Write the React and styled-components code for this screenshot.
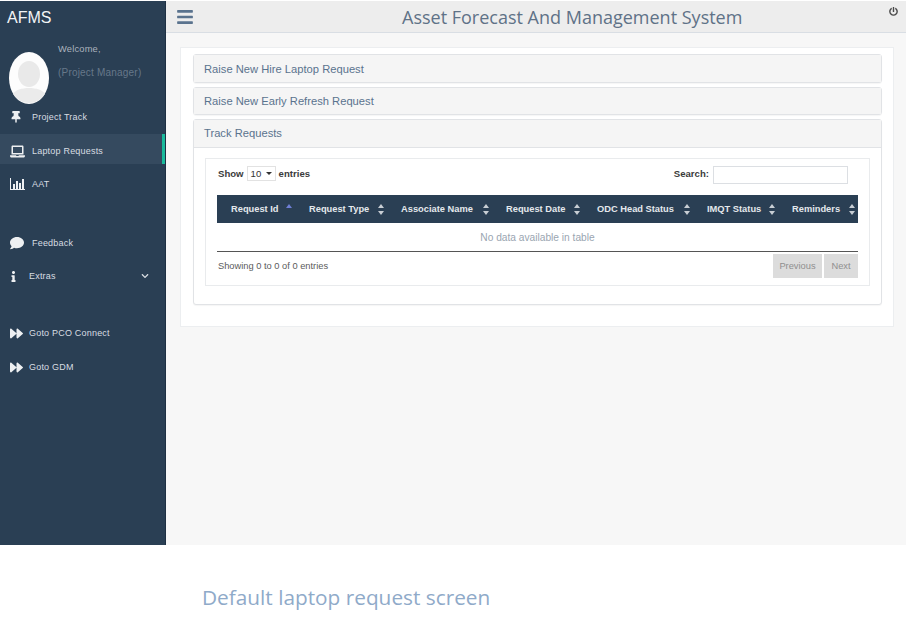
import React from 'react';
import styled, { createGlobalStyle } from 'styled-components';
import { FaThumbtack, FaLaptop, FaComment, FaInfo, FaForward, FaChevronDown, FaBars, FaPowerOff } from 'react-icons/fa';

const GlobalStyle = createGlobalStyle`
  html, body {
    margin: 0;
    background: #fff;
    font-family: "Liberation Sans", Arial, sans-serif;
  }
  * { box-sizing: border-box; }
`;

const Page = styled.div`
  width: 907px;
  height: 627px;
  padding-top: 1px;
  overflow: hidden;
`;

const Shell = styled.div`
  display: flex;
  height: 544px;
  margin-right: 1px;
`;

const Sidebar = styled.aside`
  width: 166px;
  flex: none;
  background: #2a3f54;
  border-right: 1px solid #1e3043;
  color: #e2e6ea;
`;

const Brand = styled.div`
  height: 32px;
  padding: 8px 0 0 7px;
  font-size: 16px;
  line-height: 18px;
  color: #f2f4f6;
`;

const Profile = styled.div`
  display: flex;
  height: 67px;
  padding: 4px 0 0 9px;
`;

const Avatar = styled.svg`
  width: 40px;
  height: 52px;
  flex: none;
  margin-top: 15px;
`;

const Welcome = styled.div`
  margin-left: 9px;
  padding-top: 6px;
  font-size: 10px;
  letter-spacing: 0.2px;
`;

const Hello = styled.div`
  color: #aab4be;
  font-size: 9.3px;
  line-height: 12px;
`;

const Role = styled.div`
  margin-top: 12px;
  color: #67788a;
  line-height: 12px;
`;

const NavRow = styled.div`
  position: relative;
  display: flex;
  align-items: center;
  height: 30px;
  margin-top: ${p => p.$top || 0}px;
  padding: 4px 0 0 10px;
  font-size: 9px;
  letter-spacing: 0.2px;
  color: #d8dde2;
  background: ${p => (p.$active ? '#354a5f' : 'transparent')};
  border-right: ${p => (p.$active ? '3px solid #1abb9c' : 'none')};
`;

const NavIcon = styled.span`
  display: inline-flex;
  width: ${p => p.$w || 22}px;
  margin-left: ${p => p.$shift || 0}px;
  flex: none;
  color: #eef0f2;
  font-size: 12px;
`;

const Caret = styled.span`
  display: inline-flex;
  margin-left: auto;
  margin-right: 16px;
  font-size: 8px;
`;

const Main = styled.main`
  flex: 1;
  min-width: 0;
  background: #f7f7f7;
`;

const TopBar = styled.header`
  position: relative;
  display: flex;
  align-items: center;
  height: 32px;
  background: #ededed;
  border-bottom: 1px solid #d9dee4;
`;

const MenuButton = styled.span`
  display: inline-flex;
  margin-left: 10px;
  color: #5a738e;
  font-size: 18px;
`;

const Title = styled.h1`
  margin: 0 0 0 208px;
  font-family: "Open Sans", sans-serif;
  font-size: 18px;
  font-weight: 400;
  line-height: 30px;
  color: #5f7287;
`;

const Power = styled.span`
  position: absolute;
  top: 6px;
  right: 8px;
  display: inline-flex;
  color: #4a4a4a;
  font-size: 9px;
`;

const Content = styled.div`
  margin: 14px 12px 0 14px;
  padding: 6px 11px 22px 12px;
  background: #fff;
  border: 1px solid #eceef0;
  height: 280px;
`;

const Accordion = styled.section`
  margin-bottom: 4px;
  background: #fff;
  border: 1px solid #e1e3e6;
  border-radius: 3px;
  box-shadow: 0 1px 1px rgba(0, 0, 0, 0.04);
`;

const AccordionHead = styled.div`
  height: ${p => p.$h}px;
  padding: 0 0 ${p => (p.$open ? 2 : 0)}px 10px;
  display: flex;
  align-items: center;
  background: #f5f5f5;
  font-size: 11.2px;
  color: #5a738e;
  border-bottom: ${p => (p.$open ? '1px solid #e1e3e6' : 'none')};
`;

const AccordionBody = styled.div`
  padding: 10px 11px 18px 11px;
`;

const TableBox = styled.div`
  height: 128px;
  padding: 0 11px;
  border: 1px solid #e9ebed;
`;

const ControlRow = styled.div`
  display: flex;
  justify-content: space-between;
  height: 36px;
  padding: 7px 0 0 1px;
  font-size: 9.6px;
  font-weight: 700;
  color: #3b3b3b;
`;

const Control = styled.label`
  display: flex;
  align-items: flex-start;
  gap: 3px;
  line-height: 15px;
`;

const FakeSelect = styled.span`
  display: inline-flex;
  align-items: center;
  justify-content: space-between;
  width: 29px;
  height: 15px;
  padding: 0 3px;
  border: 1px solid #e2e2e2;
  font-weight: 400;
  color: #333;
`;

const SelectArrow = styled.span`
  width: 0;
  height: 0;
  border-left: 3px solid transparent;
  border-right: 3px solid transparent;
  border-top: 3px solid #333;
`;

const SearchBox = styled.input`
  width: 135px;
  height: 18px;
  margin: 0 10px 0 1px;
  border: 1px solid #dcdfe3;
  background: #fff;
`;

const Table = styled.table`
  width: 641px;
  border-collapse: collapse;
  table-layout: fixed;
  font-size: 9.3px;
`;

const HeadCell = styled.th`
  position: relative;
  height: 28px;
  padding: 0 0 0 ${p => p.$pad}px;
  width: ${p => p.$w}px;
  background: #2a3f54;
  text-align: left;
  font-weight: 700;
  color: #e4e8ec;
  white-space: nowrap;
`;

const SortIcon = styled.svg`
  position: absolute;
  top: 9px;
  right: ${p => p.$right}px;
  width: 6px;
  height: 11px;
`;

const EmptyCell = styled.td`
  height: 28px;
  padding-top: 2px;
  text-align: center;
  font-size: 10.2px;
  color: #9aa5b1;
  border-bottom: 1px solid #555;
`;

const Footer = styled.div`
  display: flex;
  justify-content: space-between;
  padding: 2px 0 0 1px;
  font-size: 9.3px;
  color: #5b5b5b;
`;

const Info = styled.div`
  padding-top: 6px;
  line-height: 12px;
`;

const Pager = styled.div`
  display: flex;
  gap: 2px;
`;

const PageButton = styled.span`
  display: flex;
  align-items: center;
  justify-content: center;
  width: ${p => p.$w}px;
  height: 24px;
  background: #dcdcdc;
  color: #8f8f8f;
`;

const Caption = styled.div`
  padding: 38px 0 0 202px;
  font-family: "Open Sans", sans-serif;
  font-size: 20.8px;
  line-height: 28px;
  color: #8faac9;
`;

function BarsIcon() {
  return (
    <svg width="15" height="12" viewBox="0 0 15 12" fill="#eef0f2">
      <rect x="0" y="0" width="1" height="11" />
      <rect x="0" y="11" width="15" height="1" />
      <rect x="3" y="6" width="2" height="5" />
      <rect x="6" y="3" width="2" height="8" />
      <rect x="9" y="5" width="2" height="6" />
      <rect x="12" y="1" width="2" height="10" />
    </svg>
  );
}

const nav = [
  { label: 'Project Track', icon: <FaThumbtack /> },
  { label: 'Laptop Requests', icon: <FaLaptop size={15} />, top: 4, active: true },
  { label: 'AAT', icon: <BarsIcon />, top: 3 },
  { label: 'Feedback', icon: <FaComment size={14} />, top: 29 },
  { label: 'Extras', icon: <FaInfo size={11} />, top: 3, w: 21, shift: -2, caret: true },
  { label: 'Goto PCO Connect', icon: <FaForward size={13} />, top: 27, w: 19 },
  { label: 'Goto GDM', icon: <FaForward size={13} />, top: 4, w: 19 },
];

const columns = [
  { label: 'Request Id', w: 78, pad: 14, right: 3, asc: true },
  { label: 'Request Type', w: 92, pad: 14, right: 3 },
  { label: 'Associate Name', w: 104, pad: 14, right: 2 },
  { label: 'Request Date', w: 92, pad: 15, right: 3 },
  { label: 'ODC Head Status', w: 109, pad: 14, right: 2 },
  { label: 'IMQT Status', w: 85, pad: 15, right: 2 },
  { label: 'Reminders', w: 81, pad: 15, right: 3 },
];

function Sort({ asc, right }) {
  return (
    <SortIcon $right={right} viewBox="0 0 6 11">
      <path d="M3 0 L6 4 L0 4 Z" fill={asc ? '#6f7fd6' : '#c8ced4'} />
      {!asc && <path d="M3 11 L6 7 L0 7 Z" fill="#c8ced4" />}
    </SortIcon>
  );
}

export default function App() {
  return (
    <Page>
      <GlobalStyle />
      <Shell>
        <Sidebar>
          <Brand>AFMS</Brand>
          <Profile>
            <Avatar viewBox="0 0 40 52">
              <ellipse cx="20" cy="26" rx="20" ry="26" fill="#fdfdfd" />
              <ellipse cx="20" cy="22" rx="11" ry="13" fill="#e9e9e9" />
              <path d="M4 42 C8 34 32 34 36 42 C32 48 26 51 20 51 C14 51 8 48 4 42 Z" fill="#ebebeb" />
            </Avatar>
            <Welcome>
              <Hello>Welcome,</Hello>
              <Role>(Project Manager)</Role>
            </Welcome>
          </Profile>
          {nav.map(item => (
            <NavRow key={item.label} $top={item.top} $active={item.active}>
              <NavIcon $w={item.w} $shift={item.shift}>{item.icon}</NavIcon>
              {item.label}
              {item.caret && (
                <Caret>
                  <FaChevronDown />
                </Caret>
              )}
            </NavRow>
          ))}
        </Sidebar>
        <Main>
          <TopBar>
            <MenuButton>
              <FaBars />
            </MenuButton>
            <Title>Asset Forecast And Management System</Title>
            <Power>
              <FaPowerOff />
            </Power>
          </TopBar>
          <Content>
            <Accordion>
              <AccordionHead $h={27}>Raise New Hire Laptop Request</AccordionHead>
            </Accordion>
            <Accordion>
              <AccordionHead $h={26}>Raise New Early Refresh Request</AccordionHead>
            </Accordion>
            <Accordion>
              <AccordionHead $h={28} $open>
                Track Requests
              </AccordionHead>
              <AccordionBody>
                <TableBox>
                  <ControlRow>
                    <Control>
                      Show
                      <FakeSelect>
                        10
                        <SelectArrow />
                      </FakeSelect>
                      entries
                    </Control>
                    <Control>
                      Search:
                      <SearchBox />
                    </Control>
                  </ControlRow>
                  <Table>
                    <thead>
                      <tr>
                        {columns.map(col => (
                          <HeadCell key={col.label} $w={col.w} $pad={col.pad}>
                            {col.label}
                            <Sort asc={col.asc} right={col.right} />
                          </HeadCell>
                        ))}
                      </tr>
                    </thead>
                    <tbody>
                      <tr>
                        <EmptyCell colSpan={7}>No data available in table</EmptyCell>
                      </tr>
                    </tbody>
                  </Table>
                  <Footer>
                    <Info>Showing 0 to 0 of 0 entries</Info>
                    <Pager>
                      <PageButton $w={49}>Previous</PageButton>
                      <PageButton $w={34}>Next</PageButton>
                    </Pager>
                  </Footer>
                </TableBox>
              </AccordionBody>
            </Accordion>
          </Content>
        </Main>
      </Shell>
      <Caption>Default laptop request screen</Caption>
    </Page>
  );
}
